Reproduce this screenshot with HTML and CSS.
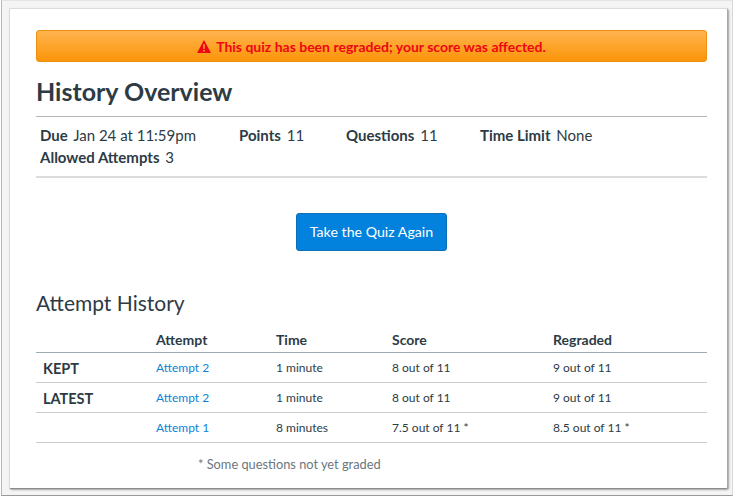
FILE: index.html
```html
<!DOCTYPE html>
<html lang="en">
<head>
<meta charset="utf-8">
<title>History Overview</title>
<link rel="stylesheet" href="styles.css">
</head>
<body>
<div class="frame">
  <main class="card">
    <div class="banner">
      <svg class="warn" viewBox="0 0 14 13" width="14" height="13" aria-hidden="true">
        <path fill-rule="evenodd" d="M7 0 L14 13 L0 13 Z M6.1 4.2 L6.4 9 L7.6 9 L7.9 4.2 Z M6.1 10 L6.1 11.5 L7.9 11.5 L7.9 10 Z"/>
      </svg>
      <span>This quiz has been regraded; your score was affected.</span>
    </div>
    <h1 class="title">History Overview</h1>
    <div class="meta">
      <div class="meta-row">
        <span class="meta-item due"><b>Due</b> Jan 24 at 11:59pm</span>
        <span class="meta-item points"><b>Points</b> 11</span>
        <span class="meta-item questions"><b>Questions</b> 11</span>
        <span class="meta-item"><b>Time Limit</b> None</span>
      </div>
      <div class="meta-row">
        <span class="meta-item"><b>Allowed Attempts</b> 3</span>
      </div>
    </div>
    <div class="action"><a class="btn" href="#">Take the Quiz Again</a></div>
    <h2 class="subtitle">Attempt History</h2>
    <table class="history">
      <thead>
        <tr><th></th><th>Attempt</th><th>Time</th><th>Score</th><th>Regraded</th></tr>
      </thead>
      <tbody>
        <tr><td class="tag">KEPT</td><td><a href="#">Attempt 2</a></td><td>1 minute</td><td>8 out of 11</td><td>9 out of 11</td></tr>
        <tr><td class="tag">LATEST</td><td><a href="#">Attempt 2</a></td><td>1 minute</td><td>8 out of 11</td><td>9 out of 11</td></tr>
        <tr><td class="tag"></td><td><a href="#">Attempt 1</a></td><td>8 minutes</td><td>7.5 out of 11 *</td><td>8.5 out of 11 *</td></tr>
      </tbody>
    </table>
    <p class="note">* Some questions not yet graded</p>
  </main>
</div>
</body>
</html>
```
FILE: styles.css
```css
* { box-sizing: border-box; }
html, body { margin: 0; height: 100%; background: #fff; }
body { font-family: Lato, "Open Sans", sans-serif; color: #2d3b45; }
.frame {
  width: 732px;
  height: 496px;
  margin-left: 1px;
  padding: 7px 4px 0 7px;
  background: #f4f4f4;
  border-left: 1px solid #b8b8b8;
  border-bottom: 1px solid #9a9a9a;
  border-right: 1px solid #d8d8d8;
  border-top: 1px solid #e4e4e4;
}
.card {
  width: 719px;
  height: 481px;
  padding: 21px 20px 0 26px;
  background: #fff;
  border-radius: 2px;
  border: 1px solid #dcdcdc;
  border-right-color: #a8a8a8;
  border-bottom-color: #8c8c8c;
  box-shadow: 1px 1px 2px rgba(0,0,0,.35);
}
.banner {
  height: 32px;
  display: flex;
  align-items: center;
  justify-content: center;
  gap: 5px;
  font-size: 14px;
  font-weight: 700;
  color: #ee0612;
  background: linear-gradient(#ffb44f, #fb9508);
  border: 1px solid #ee9010;
  border-radius: 3px;
}
.warn { fill: #ee0612; flex: none; }
.title {
  margin: 13px 0 0;
  font-size: 25px;
  line-height: 32px;
  font-weight: 700;
  color: #2d3b45;
  padding-bottom: 9px;
  border-bottom: 1px solid #b4b4b4;
}
.meta {
  padding: 7px 4px 8px;
  border-bottom: 2px solid #dcdcdc;
  font-size: 15px;
  line-height: 22px;
}
.meta-row { display: flex; }
.meta-item b { font-weight: 700; margin-right: 2px; }
.due { width: 199px; }
.points { width: 107px; }
.questions { width: 134px; }
.action { display: flex; justify-content: center; margin-top: 35px; }
.btn {
  display: block;
  width: 151px;
  height: 38px;
  line-height: 36px;
  text-align: center;
  font-size: 14.2px;
  color: #fff;
  text-decoration: none;
  background: #0281dd;
  border: 1px solid #0b6fb8;
  border-radius: 3px;
}
.subtitle {
  margin: 39px 0 0;
  font-size: 21px;
  line-height: 26px;
  font-weight: 400;
}
.history {
  width: 671px;
  margin-top: 10px;
  border-collapse: collapse;
  table-layout: fixed;
  font-size: 12px;
}
.history th:nth-child(1) { width: 113px; }
.history th:nth-child(2) { width: 120px; }
.history th:nth-child(3) { width: 116px; }
.history th:nth-child(4) { width: 161px; }
.history th {
  height: 26px;
  padding: 2px 7px 0;
  text-align: left;
  font-size: 14px;
  font-weight: 700;
  border-bottom: 1px solid #9fabb3;
}
.history td {
  height: 30px;
  padding: 0 7px;
  border-bottom: 1px solid #c7cdd1;
}
.history td.tag { font-size: 14.5px; font-weight: 700; padding-top: 2px; }
.history a { color: #0a84d8; text-decoration: none; }
.note {
  margin: 13px 0 0 162px;
  font-size: 12.8px;
  line-height: 16px;
  color: #6b7780;
}
```
